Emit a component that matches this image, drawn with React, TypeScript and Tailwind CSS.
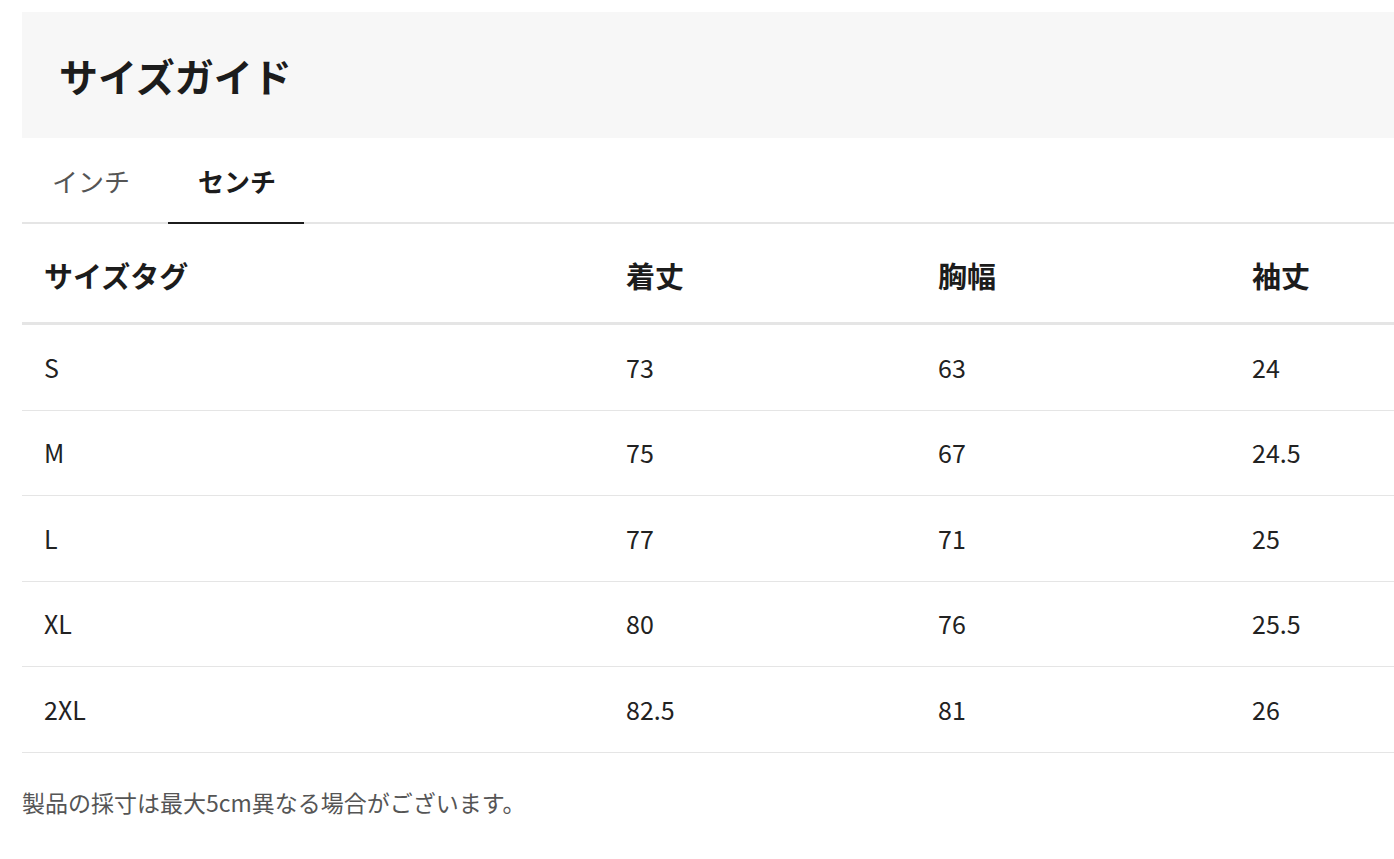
const rows = [
  ['S', '73', '63', '24'],
  ['M', '75', '67', '24.5'],
  ['L', '77', '71', '25'],
  ['XL', '80', '76', '25.5'],
  ['2XL', '82.5', '81', '26'],
]

const cols = 'grid grid-cols-[582px_312px_314px_1fr]'

export default function App() {
  return (
    <div
      className="min-h-screen bg-white pt-[12px] pl-[22px] text-[#222]"
      style={{ fontFamily: '"Noto Sans CJK JP", "Noto Sans", sans-serif' }}
    >
      {/* title */}
      <div className="h-[126px] bg-[#f7f7f7] flex items-center pl-[37px]">
        <h1 className="text-[39px] font-bold leading-none text-[#1c1c1c]">サイズガイド</h1>
      </div>

      {/* tabs */}
      <div className="flex gap-2 h-[86px] border-b-2 border-[#e5e5e5]">
        <button className="px-[30px] text-[26px] text-[#555] leading-none -mb-[2px] border-b-2 border-transparent pt-[2px]">
          インチ
        </button>
        <button className="pl-[30px] pr-[28px] text-[26px] font-bold text-[#1c1c1c] leading-none -mb-[2px] border-b-2 border-[#1c1c1c] pt-[2px]">
          センチ
        </button>
      </div>

      {/* table */}
      <div>
        <div className={`${cols} h-[101px] items-center border-b-[3px] border-[#e5e5e5] text-[29px] font-bold text-[#1c1c1c] pt-[6px]`}>
          <div className="pl-[22px]">サイズタグ</div>
          <div className="pl-[22px]">着丈</div>
          <div className="pl-[22px]">胸幅</div>
          <div className="pl-[22px]">袖丈</div>
        </div>
        {rows.map((r) => (
          <div key={r[0]} className={`${cols} h-[85.5px] items-center border-b border-[#e5e5e5] text-[25px] text-[#222]`}>
            {r.map((c, i) => (
              <div key={i} className="pl-[22px]">{c}</div>
            ))}
          </div>
        ))}
      </div>

      <p className="mt-[32px] text-[23px] text-[#555]">製品の採寸は最大5cm異なる場合がございます。</p>
    </div>
  )
}
